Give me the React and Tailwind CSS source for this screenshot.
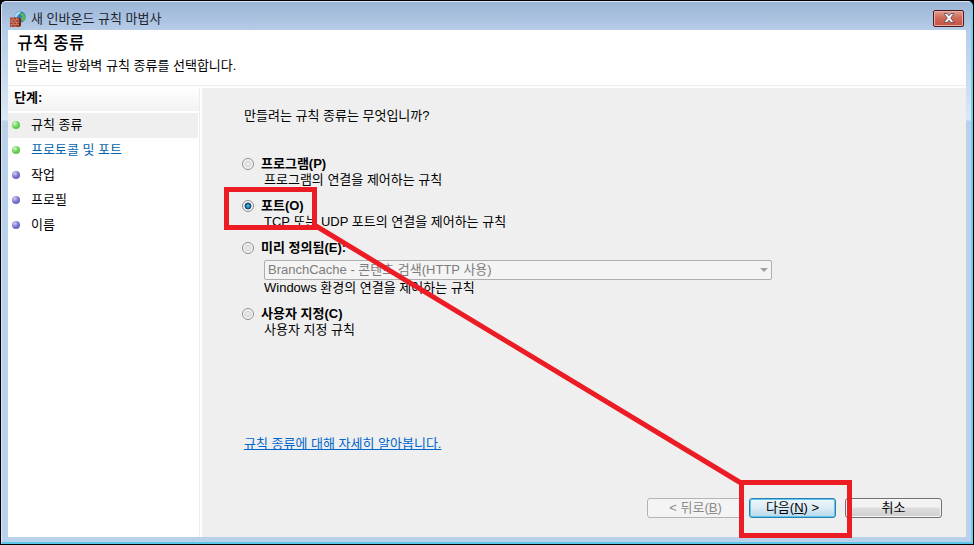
const steps = [
  { label: '규칙 종류', done: true, current: true },
  { label: '프로토콜 및 포트', done: true, link: true },
  { label: '작업' },
  { label: '프로필' },
  { label: '이름' },
];

const options = [
  { id: 'program', label: '프로그램(P)', description: '프로그램의 연결을 제어하는 규칙' },
  { id: 'port', label: '포트(O)', description: 'TCP 또는 UDP 포트의 연결을 제어하는 규칙' },
  {
    id: 'predefined',
    label: '미리 정의됨(E):',
    description: 'Windows 환경의 연결을 제어하는 규칙',
    choice: 'BranchCache - 콘텐츠 검색(HTTP 사용)',
  },
  { id: 'custom', label: '사용자 지정(C)', description: '사용자 지정 규칙' },
];

function FirewallIcon() {
  return (
    <svg viewBox="0 0 16 16" className="w-4 h-4" aria-hidden="true">
      <circle cx="10" cy="6" r="5.800" fill="#2c7fc4" />
      <path d="M4.800 4C6 1.500 8.500 .3 11 .600L9.500 3 8 4 7 6 4.500 6.500z" fill="#a9dcf2" />
      <path d="M11 1.500l3 1.500 1.500 3-1 3-2.500 1.500-1-3.500 1.500-1.500-2-1.500z" fill="#5dbb4b" />
      <path d="M0 6.500h9l2 1.500v6.500L9.500 16H0z" fill="#a5412c" />
      <path d="M9 6.500l2 1.500v6.500L9 16z" fill="#74281b" />
      <path
        d="M0 8.800h9M0 11.200h9M0 13.600h9M3 6.500v2.300M6.500 6.500v2.300M1.500 8.800v2.400M5 8.800v2.400M3 11.200v2.400M6.500 11.200v2.400M1.500 13.600v2.400M5 13.600v2.400"
        fill="none"
        stroke="#d99a86"
        strokeWidth=".6"
      />
    </svg>
  );
}

function TitleBar() {
  return (
    <header className="h-7 flex-shrink-0 flex items-center justify-between pl-[2px] pr-[2px]">
      <div className="flex items-center gap-[5px] pt-[6px]">
        <FirewallIcon />
        <h1 className="leading-4 text-[#1c2430]">새 인바운드 규칙 마법사</h1>
      </div>
      <button
        type="button"
        aria-label="닫기"
        className="w-[31px] h-[17px] mt-1 flex items-center justify-center rounded-[2px] border border-[#4b1a1e] bg-linear-to-b from-[#e2a193] via-[#cf6a59] via-45% to-[#c4503f] shadow-[inset_0_0_0_1px_#e8b0a5]"
      >
        <svg viewBox="0 0 12 10" className="w-3 h-[10px]" aria-hidden="true">
          <path d="M1 .5h3l2 2.200 2-2.200h3L7.700 5 11 9.500H8L6 7.300 4 9.500H1L4.300 5z" fill="#f6f6f6" stroke="#5b4a55" strokeWidth=".8" />
        </svg>
      </button>
    </header>
  );
}

function Steps() {
  return (
    <nav className="w-48 flex-shrink-0 border-r border-[#ececec]">
      <h3 className="h-[23px] pl-[6px] leading-5 font-bold bg-linear-to-b from-white to-[#f2f2f2]">단계:</h3>
      <ol className="mt-[2px] mr-px">
        {steps.map((step) => (
          <li
            key={step.label}
            className={`h-[25px] pl-1 pb-[2px] flex items-center gap-[11px] ${step.current ? 'bg-[#efefef]' : ''}`}
          >
            <span
              className={`w-2 h-2 rounded-full ${
                step.done
                  ? 'bg-[radial-gradient(circle_at_35%_30%,#d4f8ca,#66d052_50%,#4fb83e)]'
                  : 'bg-[radial-gradient(circle_at_35%_30%,#d2d0f5,#7470cc_50%,#5a56b4)]'
              }`}
            />
            {step.link ? <a href="#protocol" className="text-[#0563ad]">{step.label}</a> : <span>{step.label}</span>}
          </li>
        ))}
      </ol>
    </nav>
  );
}

function Option({ option }) {
  return (
    <div>
      <div className="flex items-center gap-[7px] h-4">
        <input
          type="radio"
          name="rule"
          id={option.id}
          defaultChecked={option.id === 'port'}
          className="appearance-none w-3 h-3 flex-shrink-0 rounded-full border border-[#8a8d90] bg-[radial-gradient(circle_at_50%_50%,#f2f2f2,#d6d8da_40%,#f8f8f8_60%)] checked:bg-[radial-gradient(circle_at_50%_50%,#6fd0f4,#2585b8_22%,#143f66_42%,#f4f4f4_54%)]"
        />
        <label htmlFor={option.id} className="font-bold leading-4">{option.label}</label>
      </div>
      {option.choice && (
        <div className="relative ml-[22px] mt-1">
          <select
            disabled
            aria-label={option.label}
            className="appearance-none block w-full max-w-[508px] h-5 pl-[3px] rounded-[2px] border border-[#adadad] bg-[#f4f4f4] text-[#7d7d7d] leading-4 opacity-100"
          >
            <option>{option.choice}</option>
          </select>
          <div className="absolute inset-y-0 left-0 w-full max-w-[508px] flex items-center justify-end pr-1 pointer-events-none">
            <span className="border-x-4 border-t-4 border-x-transparent border-t-[#a0a0a0]" />
          </div>
        </div>
      )}
      <p className="pl-[22px] leading-4">{option.description}</p>
    </div>
  );
}

function Buttons() {
  return (
    <div className="flex justify-end">
      <button
        type="button"
        disabled
        className="w-[97px] h-5 rounded-[3px] border border-[#b4b4b4] bg-[#f4f4f4] text-[#8a8a8a] leading-4"
      >
        &lt; 뒤로(<u>B</u>)
      </button>
      <button
        type="button"
        className="w-[87px] h-5 ml-[5px] rounded-[3px] border border-[#2c7fae] bg-linear-to-b from-[#eef6fa] via-[#dcecf5] via-50% to-[#b5d8ea] shadow-[inset_0_0_0_1px_#5cc8ee] leading-4"
      >
        다음(<u>N</u>) &gt;
      </button>
      <button
        type="button"
        className="w-[97px] h-5 ml-[9px] rounded-[3px] border border-[#707070] bg-linear-to-b from-[#f2f2f2] from-45% via-[#dddddd] via-50% to-[#cfcfcf] shadow-[inset_0_0_0_1px_#f8f8f8] leading-4"
      >
        취소
      </button>
    </div>
  );
}

// Red marks that lead from the chosen option to the next button
function Highlights() {
  return (
    <svg className="absolute inset-0 w-full h-full pointer-events-none" fill="none" stroke="#ec1c24" aria-hidden="true">
      <rect x="226.500" y="189.500" width="88" height="38" strokeWidth="5" />
      <path d="M316 226L741 483" strokeWidth="5" />
      <rect x="741.500" y="482.500" width="108" height="53" strokeWidth="5" />
    </svg>
  );
}

export default function App() {
  return (
    <div className="relative min-h-screen flex flex-col bg-black p-px text-[13px] text-black font-['Liberation_Sans','Noto_Sans_CJK_KR',sans-serif]">
      <div className="flex-1 flex flex-col rounded-t-[5px] border-t border-l border-t-[#dbe7f5] border-l-[#dbe7f5] border-r-2 border-b-2 border-r-[#6fcdee] border-b-[#5cc6ea] bg-[linear-gradient(#9bb5d6,#b6cce7_28px,#dbe8f6_118px,#b9d1ea_119px)] pl-[6px] pr-[5px] pb-[5px]">
        <TitleBar />
        <div className="flex-1 flex flex-col bg-white">
          <div className="h-14 flex-shrink-0 border-b border-[#ececec]">
            <h2 className="pl-[9px] pt-1 text-[17px] leading-5 font-medium">규칙 종류</h2>
            <p className="pl-[7px] pt-1 leading-4">만들려는 방화벽 규칙 종류를 선택합니다.</p>
          </div>
          <div className="flex-1 flex gap-[2px] pt-[2px]">
            <Steps />
            <main className="flex-1 flex flex-col bg-[#efefef] pl-[42px] pr-6 pt-5 pb-[19px]">
              <p className="leading-4">만들려는 규칙 종류는 무엇입니까?</p>
              <div className="mt-8 -ml-[2px] flex flex-col gap-[10px]">
                {options.map((option) => (
                  <Option key={option.id} option={option} />
                ))}
              </div>
              <p className="mt-auto leading-4">
                <a href="#help" className="text-[#0066cc] underline">규칙 종류에 대해 자세히 알아봅니다.</a>
              </p>
              <div className="mt-[46px]">
                <Buttons />
              </div>
            </main>
          </div>
        </div>
      </div>
      <Highlights />
    </div>
  );
}
